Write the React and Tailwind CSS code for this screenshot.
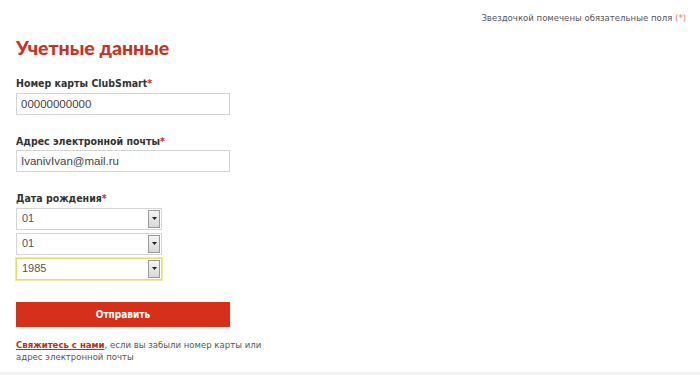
import { useState } from 'react'

const tahoma = { fontFamily: '"DejaVu Sans Condensed", Tahoma, "DejaVu Sans", sans-serif' }

const Label = ({ children }) => (
  <div className="text-[10.5px] font-bold text-[#333] leading-none mb-[4px]" style={tahoma}>
    {children}
    <span className="text-[#c8321e]">*</span>
  </div>
)

const Field = ({ value }) => (
  <input
    defaultValue={value}
    className="block w-[214px] h-[22px] border border-[#d4d4d4] bg-white px-[4px] text-[11.5px] text-[#444] outline-none font-['Liberation_Sans',Arial,sans-serif]"
  />
)

const Select = ({ value, focused }) => (
  <div
    className={`relative flex items-center w-[146px] h-[22px] bg-white border ${
      focused ? 'border-[#e6dc6a] shadow-[0_0_0_1px_#f0ea9a]' : 'border-[#d4d4d4]'
    }`}
  >
    <span className="pl-[5px] text-[11px] text-[#555] font-['Liberation_Sans',Arial,sans-serif]">{value}</span>
    <span className="ml-auto mr-px flex items-center justify-center w-[12px] h-[18px] border border-[#9a9a9a] bg-gradient-to-b from-[#f4f4f4] to-[#d8d8d8]">
      <svg width="5" height="3" viewBox="0 0 5 3">
        <path d="M0 0h5L2.5 3z" fill="#222" />
      </svg>
    </span>
  </div>
)

export default function App() {
  const [sent, setSent] = useState(false)

  return (
    <div className="relative w-[700px] h-[375px] bg-white overflow-hidden">
      <div className="px-[16px]">
        <div className="flex justify-end pt-[13px] -mr-[2px]">
          <span className="text-[9.5px] text-[#555] leading-none" style={tahoma}>
            Звездочкой помечены обязательные поля <span className="text-[#d97a6a]">(*)</span>
          </span>
        </div>

        <h1 className="mt-[15px] text-[19.5px] font-black text-[#c8321e] leading-none font-['Lato',sans-serif]">
          Учетные данные
        </h1>

        <div className="mt-[21px]">
          <Label>Номер карты ClubSmart</Label>
          <Field value="00000000000" />
        </div>

        <div className="mt-[21px]">
          <Label>Адрес электронной почты</Label>
          <Field value="IvanivIvan@mail.ru" />
        </div>

        <div className="mt-[21px]">
          <Label>Дата рождения</Label>
          <div className="flex flex-col gap-[3px]">
            <Select value="01" />
            <Select value="01" />
            <Select value="1985" focused />
          </div>
        </div>

        <button
          onClick={() => setSent(true)}
          className="mt-[22px] block w-[214px] h-[25px] bg-[#d4301a] text-white text-[10px] font-bold"
          style={tahoma}
        >
          {sent ? 'Отправлено' : 'Отправить'}
        </button>

        <p className="mt-[12px] w-[275px] text-[9.5px] leading-[12px] text-[#555]" style={tahoma}>
          <a href="#" className="font-bold text-[#b6311c] underline">Свяжитесь с нами</a>, если вы забыли номер карты или
          <br />
          адрес электронной почты
        </p>
      </div>
      <div className="absolute bottom-0 left-0 w-full h-[3px] bg-[#f2f2f2]" />
    </div>
  )
}
